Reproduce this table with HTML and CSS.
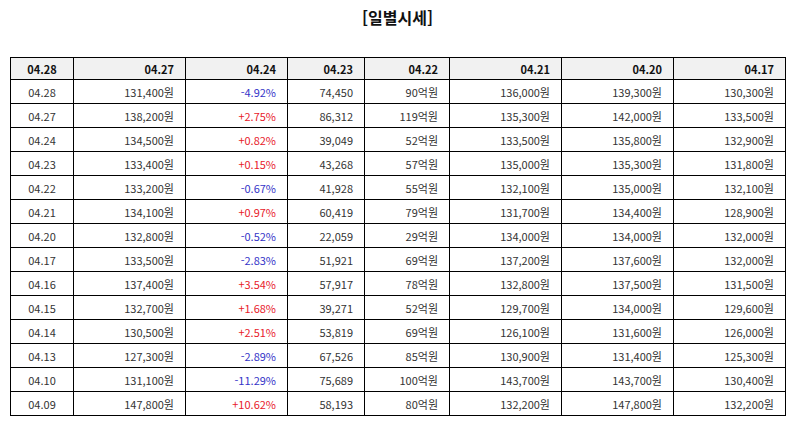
FILE: index.html
```html
<!DOCTYPE html>
<html lang="ko">
<head>
<meta charset="utf-8">
<link rel="stylesheet" href="styles.css">
</head>
<body>
<h2 class="title">[일별시세]</h2>
<table class="grid">
<colgroup>
<col class="c1"><col class="c2"><col class="c3"><col class="c4"><col class="c5"><col class="c6"><col class="c7"><col class="c8">
</colgroup>
<thead>
<tr><th class="ctr">04.28</th><th>04.27</th><th>04.24</th><th>04.23</th><th>04.22</th><th>04.21</th><th>04.20</th><th>04.17</th></tr>
</thead>
<tbody>
<tr><td class="ctr">04.28</td><td>131,400원</td><td class="dn">-4.92%</td><td>74,450</td><td>90억원</td><td>136,000원</td><td>139,300원</td><td>130,300원</td></tr>
<tr><td class="ctr">04.27</td><td>138,200원</td><td class="up">+2.75%</td><td>86,312</td><td>119억원</td><td>135,300원</td><td>142,000원</td><td>133,500원</td></tr>
<tr><td class="ctr">04.24</td><td>134,500원</td><td class="up">+0.82%</td><td>39,049</td><td>52억원</td><td>133,500원</td><td>135,800원</td><td>132,900원</td></tr>
<tr><td class="ctr">04.23</td><td>133,400원</td><td class="up">+0.15%</td><td>43,268</td><td>57억원</td><td>135,000원</td><td>135,300원</td><td>131,800원</td></tr>
<tr><td class="ctr">04.22</td><td>133,200원</td><td class="dn">-0.67%</td><td>41,928</td><td>55억원</td><td>132,100원</td><td>135,000원</td><td>132,100원</td></tr>
<tr><td class="ctr">04.21</td><td>134,100원</td><td class="up">+0.97%</td><td>60,419</td><td>79억원</td><td>131,700원</td><td>134,400원</td><td>128,900원</td></tr>
<tr><td class="ctr">04.20</td><td>132,800원</td><td class="dn">-0.52%</td><td>22,059</td><td>29억원</td><td>134,000원</td><td>134,000원</td><td>132,000원</td></tr>
<tr><td class="ctr">04.17</td><td>133,500원</td><td class="dn">-2.83%</td><td>51,921</td><td>69억원</td><td>137,200원</td><td>137,600원</td><td>132,000원</td></tr>
<tr><td class="ctr">04.16</td><td>137,400원</td><td class="up">+3.54%</td><td>57,917</td><td>78억원</td><td>132,800원</td><td>137,500원</td><td>131,500원</td></tr>
<tr><td class="ctr">04.15</td><td>132,700원</td><td class="up">+1.68%</td><td>39,271</td><td>52억원</td><td>129,700원</td><td>134,000원</td><td>129,600원</td></tr>
<tr><td class="ctr">04.14</td><td>130,500원</td><td class="up">+2.51%</td><td>53,819</td><td>69억원</td><td>126,100원</td><td>131,600원</td><td>126,000원</td></tr>
<tr><td class="ctr">04.13</td><td>127,300원</td><td class="dn">-2.89%</td><td>67,526</td><td>85억원</td><td>130,900원</td><td>131,400원</td><td>125,300원</td></tr>
<tr><td class="ctr">04.10</td><td>131,100원</td><td class="dn">-11.29%</td><td>75,689</td><td>100억원</td><td>143,700원</td><td>143,700원</td><td>130,400원</td></tr>
<tr><td class="ctr">04.09</td><td>147,800원</td><td class="up">+10.62%</td><td>58,193</td><td>80억원</td><td>132,200원</td><td>147,800원</td><td>132,200원</td></tr>
</tbody>
</table>
</body>
</html>
```
FILE: styles.css
```css
html, body {
  margin: 0;
  padding: 0;
  background: #fff;
}
body {
  font-family: "Noto Sans CJK KR", "Noto Sans", sans-serif;
  color: #222;
}
.title {
  margin: 0;
  padding-top: 6px;
  height: 57px;
  box-sizing: border-box;
  text-align: center;
  font-size: 16px;
  font-weight: bold;
  line-height: 22px;
  color: #111;
}
.grid {
  margin-left: 10px;
  width: 776px;
  border-collapse: collapse;
  table-layout: fixed;
  font-size: 11px;
}
.c1 { width: 63px; }
.c2 { width: 112px; }
.c3 { width: 102px; }
.c4 { width: 77px; }
.c5 { width: 85px; }
.c6 { width: 112px; }
.c7 { width: 112px; }
.c8 { width: 112px; }
.grid th, .grid td {
  border: 1px solid #000;
  text-align: right;
  padding: 0 11px 0 4px;
  white-space: nowrap;
}
.grid th {
  height: 21px;
  background: #f1f1f1;
  font-weight: bold;
  color: #111;
}
.grid td {
  height: 23px;
  color: #333;
}
.grid .ctr {
  text-align: center;
  padding: 0;
}
.grid td.up { color: #e8202a; }
.grid td.dn { color: #3434c8; }
```
